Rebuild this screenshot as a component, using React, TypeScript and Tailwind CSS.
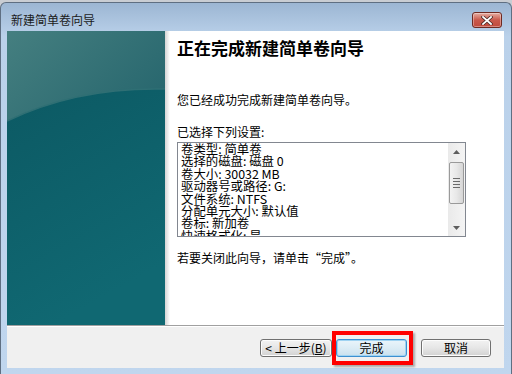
import React from 'react';

const font = "font-['Noto_Sans_CJK_SC','Noto_Sans',sans-serif]";

const settings = [
  '卷类型: 简单卷',
  '选择的磁盘: 磁盘 0',
  '卷大小: 30032 MB',
  '驱动器号或路径: G:',
  '文件系统: NTFS',
  '分配单元大小: 默认值',
  '卷标: 新加卷',
  '快速格式化: 是',
];

const WizardArt: React.FC = () => (
  <svg width="158" height="294" viewBox="0 0 158 294" className="block">
    <defs>
      <linearGradient id="deep" x1="0" y1="0" x2="0.3" y2="1">
        <stop offset="0" stopColor="#0b5660" />
        <stop offset="1" stopColor="#106872" />
      </linearGradient>
      <linearGradient id="glow" x1="0" y1="0" x2="1" y2="0.6">
        <stop offset="0" stopColor="#457f80" />
        <stop offset="1" stopColor="#29686f" />
      </linearGradient>
    </defs>
    <rect width="158" height="294" fill="url(#deep)" />
    <path d="M0 0 H158 V58 Q70 56 0 90 Z" fill="url(#glow)" />
    <path d="M0 90 Q70 56 158 58" fill="none" stroke="#2f6f74" strokeWidth="1.5" />
  </svg>
);

const Button: React.FC<{ width: string; focused?: boolean; children: React.ReactNode }> = ({ width, focused, children }) => (
  <div
    className={`${width} h-[18px] rounded-[3px] border flex items-center justify-center text-[12px] leading-none text-black ${
      focused
        ? 'border-[#3c8fd0] bg-gradient-to-b from-[#eaf5fb] via-[#dcecf5] to-[#c9e0ee] shadow-[inset_0_0_0_1px_#9fd3f2]'
        : 'border-[#707070] bg-gradient-to-b from-[#f2f2f2] via-[#e6e6e6] to-[#d2d2d2] shadow-[inset_0_0_0_1px_#fcfcfc]'
    }`}
  >
    {children}
  </div>
);

export default function App() {
  return (
    <div className={`w-[512px] h-[374px] overflow-hidden bg-[#c9cdd3] ${font}`}>
      <div className="w-[512px] h-[372px] mt-[2px] rounded-t-[6px] border-t border-x border-[#5f6f82] bg-gradient-to-b from-[#9cb6d3] via-[#bad1ea] via-[9%] to-[#c0d6ee] flex flex-col">
        {/* title bar */}
        <div className="h-[28px] flex items-start justify-between pl-[10px] pr-[9px]">
          <span className="text-[12px] leading-[14px] mt-[10px] text-[#1b1b1b]">新建简单卷向导</span>
          <div className="mt-[9px] w-[30px] h-[16px] rounded-[3px] border border-[#6e2a22] bg-gradient-to-b from-[#e4aea4] via-[#c9584b] to-[#c14a3c] flex items-center justify-center shadow-[inset_0_0_0_1px_rgba(255,255,255,0.35)]">
            <svg width="12" height="9" viewBox="0 0 12 9">
              <path d="M2 1 L10 8 M10 1 L2 8" stroke="#4a2a26" strokeWidth="3.4" strokeLinecap="square" />
              <path d="M2 1 L10 8 M10 1 L2 8" stroke="#ffffff" strokeWidth="1.8" strokeLinecap="square" />
            </svg>
          </div>
        </div>

        {/* client area */}
        <div className="ml-[6px] mr-[7px] mb-[6px] flex-1 flex flex-col">
          <div className="h-[294px] flex">
            <WizardArt />
            <div className="flex-1 bg-white flex">
              <div className="w-[5px] bg-gradient-to-r from-[#d4d4d4] to-white" />
              <div className="flex-1 pl-[7px] pt-[7px] flex flex-col">
                <h1 className="text-[17px] leading-[20px] font-bold text-black">正在完成新建简单卷向导</h1>
                <p className="mt-[34px] text-[12px] leading-[16px] text-black">您已经成功完成新建简单卷向导。</p>
                <p className="mt-[16px] text-[12px] leading-[16px] text-black">已选择下列设置:</p>
                <div className="mt-[2px] w-[289px] h-[95px] border border-[#828790] flex overflow-hidden">
                  <div className="flex-1 pl-[3px] overflow-hidden text-[12.4px] leading-[12.4px] text-black whitespace-nowrap">
                    {settings.map((s) => (
                      <div key={s} className="h-[12.4px]">{s}</div>
                    ))}
                  </div>
                  <div className="w-[17px] bg-gradient-to-r from-[#eaeaea] to-[#f4f4f4] flex flex-col items-center">
                    <div className="h-[17px] flex items-center justify-center">
                      <svg width="7" height="4" viewBox="0 0 7 4"><path d="M3.5 0 L7 4 H0 Z" fill="#5e5e5e" /></svg>
                    </div>
                    <div className="mt-[2px] w-[15px] h-[42px] rounded-[2px] border border-[#9a9a9a] bg-gradient-to-r from-[#f3f3f3] via-[#e8e8e8] to-[#d6d6d6] flex flex-col items-center justify-center gap-[2px]">
                      <div className="w-[7px] h-px bg-[#6b6b6b]" />
                      <div className="w-[7px] h-px bg-[#6b6b6b]" />
                      <div className="w-[7px] h-px bg-[#6b6b6b]" />
                      <div className="w-[7px] h-px bg-[#6b6b6b]" />
                    </div>
                    <div className="flex-1" />
                    <div className="h-[17px] flex items-center justify-center">
                      <svg width="7" height="4" viewBox="0 0 7 4"><path d="M0 0 H7 L3.5 4 Z" fill="#5e5e5e" /></svg>
                    </div>
                  </div>
                </div>
                <p className="mt-[13px] text-[12px] leading-[16px] text-black">若要关闭此向导，请单击“完成”。</p>
              </div>
            </div>
          </div>

          {/* separator */}
          <div className="h-px bg-[#a0a0a0]" />
          <div className="h-px bg-white" />

          {/* button bar */}
          <div className="flex-1 bg-[#f0f0f0] flex justify-end items-start pt-[12px] pr-[13px]">
            <Button width="w-[72px]">
              <span>&lt; 上一步(<u>B</u>)</span>
            </Button>
            <div className="relative ml-[4px]">
              <Button width="w-[71px]" focused>
                完成
              </Button>
              <div className="absolute -left-[4px] -right-[6px] -top-[8px] -bottom-[8px] border-4 border-[#ff0000] shadow-[2px_2px_2px_rgba(0,0,0,0.3)]" />
            </div>
            <div className="ml-[14px]">
              <Button width="w-[70px]">取消</Button>
            </div>
          </div>
        </div>
      </div>
    </div>
  );
}
